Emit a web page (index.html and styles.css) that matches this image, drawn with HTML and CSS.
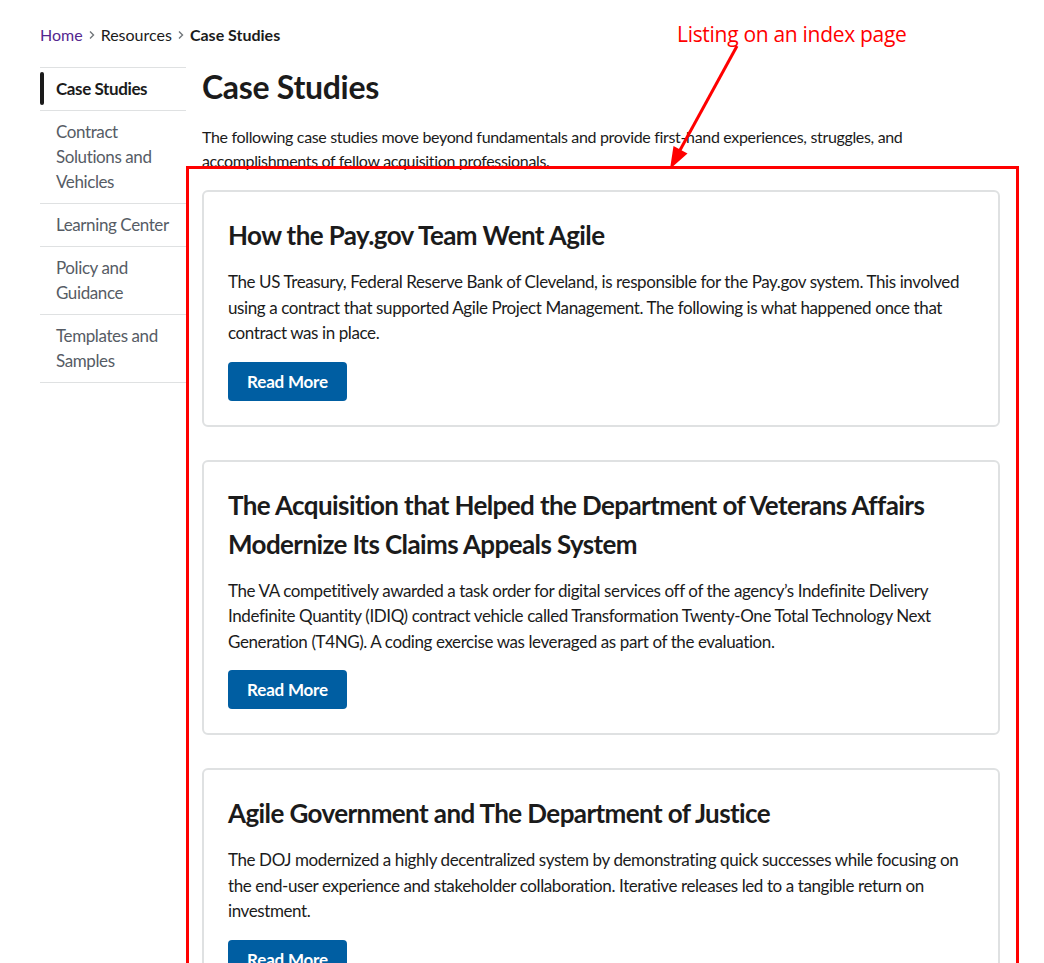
FILE: index.html
```html
<!DOCTYPE html>
<html lang="en">
<head>
<meta charset="utf-8">
<title>Case Studies</title>
<link rel="stylesheet" href="styles.css">
</head>
<body>
<div class="page">
  <nav class="breadcrumb">
    <a class="crumb-link" href="#">Home</a>
    <svg class="chev" viewBox="0 0 6 10" width="6" height="10"><path d="M1 1.5 L4.5 5 L1 8.5" fill="none" stroke="#71767a" stroke-width="1.4"/></svg>
    <span class="crumb">Resources</span>
    <svg class="chev" viewBox="0 0 6 10" width="6" height="10"><path d="M1 1.5 L4.5 5 L1 8.5" fill="none" stroke="#71767a" stroke-width="1.4"/></svg>
    <strong class="crumb-current">Case Studies</strong>
  </nav>
  <div class="layout">
    <aside class="sidenav">
      <ul class="sidenav-list">
        <li class="sidenav-item current"><a href="#">Case Studies</a></li>
        <li class="sidenav-item"><a href="#">Contract Solutions and Vehicles</a></li>
        <li class="sidenav-item"><a href="#">Learning Center</a></li>
        <li class="sidenav-item"><a href="#">Policy and Guidance</a></li>
        <li class="sidenav-item"><a href="#">Templates and Samples</a></li>
      </ul>
    </aside>
    <main class="content">
      <h1 class="title">Case Studies</h1>
      <p class="intro">The following case studies move beyond fundamentals and provide first-hand experiences, struggles, and accomplishments of fellow acquisition professionals.</p>
      <article class="card">
        <h2 class="card-title">How the Pay.gov Team Went Agile</h2>
        <p class="card-text">The US Treasury, Federal Reserve Bank of Cleveland, is responsible for the Pay.gov system. This involved using a contract that supported Agile Project Management. The following is what happened once that contract was in place.</p>
        <a class="btn" href="#">Read More</a>
      </article>
      <article class="card">
        <h2 class="card-title">The Acquisition that Helped the Department of Veterans Affairs Modernize Its Claims Appeals System</h2>
        <p class="card-text">The VA competitively awarded a task order for digital services off of the agency’s Indefinite Delivery Indefinite Quantity (IDIQ) contract vehicle called Transformation Twenty-One Total Technology Next Generation (T4NG). A coding exercise was leveraged as part of the evaluation.</p>
        <a class="btn" href="#">Read More</a>
      </article>
      <article class="card">
        <h2 class="card-title">Agile Government and The Department of Justice</h2>
        <p class="card-text">The DOJ modernized a highly decentralized system by demonstrating quick successes while focusing on the end-user experience and stakeholder collaboration. Iterative releases led to a tangible return on investment.</p>
        <a class="btn" href="#">Read More</a>
      </article>
    </main>
  </div>
</div>
<div class="annot-box"></div>
<div class="annot-label">Listing on an index page</div>
<svg class="annot-arrow" width="1044" height="963" viewBox="0 0 1044 963">
  <line x1="737" y1="46" x2="679" y2="152" stroke="#ff0000" stroke-width="3"/>
  <polygon points="670,169 673.5,145.9 687.5,153.5" fill="#ff0000"/>
</svg>
</body>
</html>
```

FILE: styles.css
```css
* { box-sizing: border-box; }
html, body { margin: 0; padding: 0; background: #fff; }
body {
  font-family: Lato, "Liberation Sans", sans-serif;
  color: #1b1b1b;
  overflow: hidden;
  height: 963px;
  position: relative;
}
.page {
  padding: 23px 0 0 40px;
  width: 1000px;
}
.breadcrumb {
  display: flex;
  align-items: center;
  font-size: 16px;
  line-height: 24px;
  height: 24px;
  letter-spacing: 0;
}
.crumb-link { color: #54278f; text-decoration: none; }
.crumb { color: #1b1b1b; }
.crumb-current { font-weight: 700; }
.chev { margin: 0 6px 0 6px; flex: none; }
.layout {
  display: flex;
  gap: 16px;
  margin-top: 20px;
  align-items: flex-start;
}
.sidenav { width: 146px; flex: none; }
.sidenav-list {
  list-style: none;
  margin: 0;
  padding: 0;
  border-top: 1px solid #dfe1e2;
}
.sidenav-item {
  border-bottom: 1px solid #dfe1e2;
  position: relative;
}
.sidenav-item a {
  display: block;
  padding: 8px 4px 9px 16px;
  font-size: 17px;
  line-height: 25px;
  color: #565c65;
  text-decoration: none;
  letter-spacing: -0.4px;
}
.sidenav-item.current a { color: #1b1b1b; font-weight: 700; }
.sidenav-item.current::before {
  content: "";
  position: absolute;
  left: 0;
  top: 4px;
  bottom: 5px;
  width: 4px;
  border-radius: 4px;
  background: #1b1b1b;
}
.content { width: 798px; flex: none; }
.title {
  margin: 0;
  font-size: 32px;
  line-height: 40px;
  font-weight: 700;
  letter-spacing: -0.3px;
}
.intro {
  margin: 18px 0 17px;
  font-size: 16px;
  line-height: 24px;
  letter-spacing: -0.33px;
}
.card {
  border: 2px solid #dfe1e2;
  border-radius: 6px;
  padding: 24px;
  margin-bottom: 33px;
}
.card-title {
  margin: 0 0 14px;
  font-size: 26px;
  line-height: 39px;
  font-weight: 700;
  letter-spacing: -0.6px;
}
.card-text {
  margin: 0 0 16px;
  font-size: 17px;
  line-height: 25.5px;
  letter-spacing: -0.4px;
}
.btn {
  display: inline-flex;
  align-items: center;
  justify-content: center;
  height: 39px;
  width: 119px;
  background: #005ea2;
  color: #fff;
  font-weight: 700;
  font-size: 17px;
  text-decoration: none;
  border-radius: 4px;
  letter-spacing: -0.2px;
}
.annot-box {
  position: absolute;
  left: 186px;
  top: 166px;
  width: 833px;
  height: 900px;
  border: 3px solid #ff0000;
  pointer-events: none;
}
.annot-label {
  position: absolute;
  left: 677px;
  top: 19px;
  font-family: "Open Sans", sans-serif;
  font-size: 21px;
  line-height: 30px;
  color: #ff0000;
  letter-spacing: -0.3px;
}
.annot-arrow {
  position: absolute;
  left: 0;
  top: 0;
  pointer-events: none;
}
```
